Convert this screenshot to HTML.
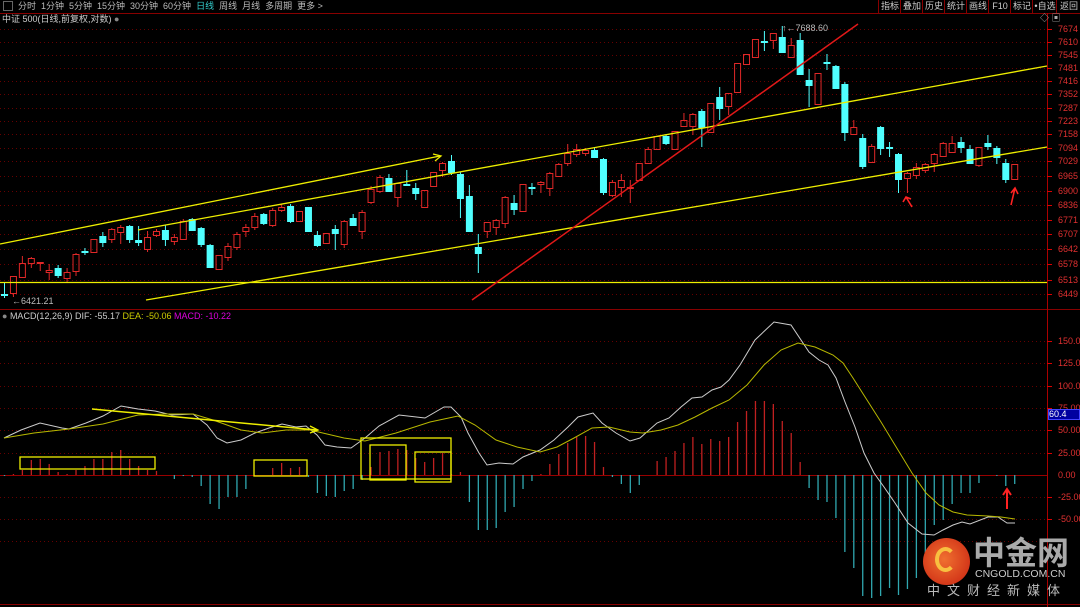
<!DOCTYPE html>
<html><head><meta charset="utf-8"><style>
body{margin:0;background:#000;width:1080px;height:607px;overflow:hidden;position:relative;font-family:"Liberation Sans","Noto Sans CJK SC",sans-serif;color:#c8c8c8}
.t{position:absolute;font-size:9px;white-space:nowrap;line-height:11px}
#svg{position:absolute;left:0;top:0}
.ax{position:absolute;left:1058px;font-size:9px;color:#e03030;line-height:10px}
.btn{position:absolute;top:0;height:13px;font-size:9px;line-height:13px;color:#ccc;border-left:1px solid #800;text-align:center}
</style></head><body>
<svg id="svg" width="1080" height="607"></svg>
<div class="t" style="left:3px;top:1px;width:10px;height:10px;border:1px solid #666;box-sizing:border-box"></div>
<div class="t" style="left:18px;top:1px;color:#bbb">分时 &nbsp;1分钟 &nbsp;5分钟 &nbsp;15分钟 &nbsp;30分钟 &nbsp;60分钟 &nbsp;<span style="color:#3cc">日线</span> &nbsp;周线 &nbsp;月线 &nbsp;多周期 &nbsp;更多 &gt;</div>
<div class="btn" style="left:878px;width:22px">指标</div>
<div class="btn" style="left:900px;width:22px">叠加</div>
<div class="btn" style="left:922px;width:22px">历史</div>
<div class="btn" style="left:944px;width:22px">统计</div>
<div class="btn" style="left:966px;width:22px">画线</div>
<div class="btn" style="left:988px;width:22px">F10</div>
<div class="btn" style="left:1010px;width:22px">标记</div>
<div class="btn" style="left:1032px;width:24px">•自选</div>
<div class="btn" style="left:1056px;width:24px">返回</div>
<div class="t" style="left:2px;top:14px;color:#ccc">中证 500(日线,前复权,对数) <span style="color:#888">●</span></div>
<div class="t" style="left:1040px;top:13px;color:#aaa">◇ ▣</div>
<div class="t" style="left:2px;top:311px;color:#ccc"><span style="color:#888">●</span> MACD(12,26,9) DIF: -55.17 <span style="color:#cc0">DEA: -50.06</span> <span style="color:#d0d">MACD: -10.22</span></div>
<div class="t" style="left:12px;top:296px;color:#bbb">←6421.21</div>
<div class="t" style="left:782px;top:23px;color:#bbb">↑←7688.60</div>
<div class="ax" style="top:24px">7674</div><div class="ax" style="top:37px">7610</div><div class="ax" style="top:50px">7545</div><div class="ax" style="top:63px">7481</div><div class="ax" style="top:76px">7416</div><div class="ax" style="top:89px">7352</div><div class="ax" style="top:103px">7287</div><div class="ax" style="top:116px">7223</div><div class="ax" style="top:129px">7158</div><div class="ax" style="top:143px">7094</div><div class="ax" style="top:156px">7029</div><div class="ax" style="top:171px">6965</div><div class="ax" style="top:186px">6900</div><div class="ax" style="top:200px">6836</div><div class="ax" style="top:215px">6771</div><div class="ax" style="top:229px">6707</div><div class="ax" style="top:244px">6642</div><div class="ax" style="top:259px">6578</div><div class="ax" style="top:275px">6513</div><div class="ax" style="top:289px">6449</div>
<div class="ax" style="top:336px">150.0</div><div class="ax" style="top:358px">125.0</div><div class="ax" style="top:381px">100.0</div><div class="ax" style="top:403px">75.00</div><div class="ax" style="top:425px">50.00</div><div class="ax" style="top:448px">25.00</div><div class="ax" style="top:470px">0.00</div><div class="ax" style="top:492px">-25.00</div><div class="ax" style="top:514px">-50.00</div>
<div class="t" style="left:1048px;top:409px;width:32px;height:11px;background:#0000a0;border:1px solid #44f;box-sizing:border-box;color:#fff;line-height:9px">60.4</div>
<div style="position:absolute;left:923px;top:538px;width:47px;height:47px;border-radius:50%;background:radial-gradient(circle at 45% 45%,#f07030,#c82010)"></div>
<div style="position:absolute;left:935px;top:547px;width:21px;height:25px;border-radius:50%;border:4px solid #f8c040;box-sizing:border-box;border-right-color:transparent"></div>
<div class="t" style="left:973px;top:534px;font-size:32px;line-height:38px;color:#aaa;font-weight:bold">中金网</div>
<div class="t" style="left:975px;top:569px;font-size:10.5px;color:#ccc">CNGOLD.COM.CN</div>
<div class="t" style="left:927px;top:583px;font-size:13px;line-height:15px;color:#bbb;letter-spacing:7px">中文财经新媒体</div>
<script>
var s='';
function L(x1,y1,x2,y2,c,w,e){s+='<line x1="'+x1+'" y1="'+y1+'" x2="'+x2+'" y2="'+y2+'" stroke="'+c+'" stroke-width="'+(w||1)+'"'+(e||'')+'/>';}
L(0,13.5,1080,13.5,'#800');L(0,309.5,1080,309.5,'#800');L(0,604.5,1080,604.5,'#800');L(1047.5,13,1047.5,607,'#a00');
var gy=[29,42,55,68,81,94,108,121,134,148,161,176,191,205,220,234,249,264,280,294];
gy.forEach(function(y){L(0,y+.5,1047,y+.5,'#600',1,' stroke-dasharray="1,3"');L(1047,y+.5,1052,y+.5,'#d00');});
[341,363,386,408,430,453,497,519,541].forEach(function(y){L(0,y+.5,1047,y+.5,'#600',1,' stroke-dasharray="1,3"');L(1047,y+.5,1052,y+.5,'#d00');});
L(0,475.5,1047,475.5,'#900');
var C=[[0,294,294,282,298],[1,276,293,276,297],[1,263,277,256,277],[1,258,263,257,268],[1,262,262,262,271],[1,270,272,264,280],[0,268,275,265,278],[1,272,278,268,282],[1,254,271,253,276],[0,251,251,248,255],[1,239,252,239,253],[0,236,242,232,247],[1,229,239,228,243],[1,227,232,225,244],[0,226,239,225,243],[0,240,242,226,246],[1,237,249,231,252],[1,231,235,229,237],[0,230,239,225,246],[1,237,241,234,245],[1,221,239,219,239],[0,219,230,218,231],[0,228,244,227,247],[0,245,267,244,268],[1,255,269,255,269],[1,246,257,243,261],[1,234,247,232,250],[1,227,231,224,237],[1,216,227,213,230],[0,214,223,213,225],[1,210,225,208,227],[1,207,210,204,212],[0,206,221,204,223],[1,211,221,211,221],[0,207,231,207,231],[0,235,245,231,247],[1,233,243,233,244],[0,229,233,225,250],[1,221,244,220,248],[0,218,225,214,226],[1,212,231,210,239],[1,189,202,186,204],[1,177,191,175,193],[0,178,191,174,191],[1,183,197,183,207],[0,184,184,170,185],[0,188,193,183,200],[1,190,207,190,207],[1,172,186,172,186],[1,163,170,162,177],[0,161,172,155,175],[0,174,198,172,218],[0,196,231,185,231],[0,247,253,234,273],[1,222,231,222,238],[1,220,227,219,235],[1,197,223,196,228],[0,203,209,195,215],[1,184,211,184,211],[0,187,187,183,195],[1,182,184,181,193],[1,173,188,172,196],[1,164,176,163,177],[1,153,163,144,166],[1,149,154,144,157],[1,150,153,148,156],[0,150,157,147,158],[0,159,192,158,195],[1,182,195,180,197],[1,180,187,174,197],[1,187,188,180,203],[1,163,180,163,180],[1,149,163,147,164],[1,136,149,136,149],[0,136,143,134,145],[1,131,149,131,149],[1,120,126,113,127],[1,114,126,113,135],[0,111,127,109,147],[1,103,132,103,132],[0,97,108,87,120],[1,93,106,93,115],[1,63,92,63,92],[1,54,64,54,65],[1,39,57,39,57],[0,41,41,31,51],[1,33,40,33,49],[0,37,52,26,53],[1,45,57,38,57],[0,40,74,33,75],[0,80,85,69,107],[1,73,104,73,104],[0,62,62,54,70],[0,66,88,65,88],[0,84,132,82,141],[1,127,134,120,135],[0,138,166,134,169],[1,146,162,144,162],[0,127,148,126,155],[0,147,147,142,157],[0,154,179,153,193],[1,173,178,172,193],[1,167,175,163,179],[1,164,170,163,173],[1,154,163,153,172],[1,143,156,142,157],[1,143,152,136,153],[0,142,147,137,153],[0,149,163,145,163],[1,147,165,147,167],[0,143,146,135,150],[0,148,157,146,164],[0,163,179,159,183],[1,164,179,164,179]];
C.forEach(function(c,i){var x=4+8.94*i,col=c[0]?'#e02828':'#50ffff';
L(x+.5,c[3],x+.5,c[1],col);L(x+.5,c[2],x+.5,c[4],col);var h=Math.max(c[2]-c[1],1);
if(c[0])s+='<rect x="'+(x-2.5)+'" y="'+(c[1]+.5)+'" width="6" height="'+h+'" fill="none" stroke="'+col+'"/>';
else s+='<rect x="'+(x-3)+'" y="'+c[1]+'" width="7" height="'+(h+1)+'" fill="'+col+'"/>';});
L(0,282.5,1047,282.5,'#ee0',1.3);
L(0,244,440,156,'#ee0',1.3);s+='<path d="M433,154 L441,156 L435,161" fill="none" stroke="#ee0" stroke-width="1.3"/>';
L(138,230,1047,66,'#ee0',1.3);L(146,300,1047,147,'#ee0',1.3);L(472,300,858,24,'#e01818',1.5);
s+='<path d="M912,207 L906,197 M903,202 L906,197 L911,199" stroke="#f22" stroke-width="1.6" fill="none"/>';
s+='<path d="M1011,205 L1015,188 M1011,193 L1015,188 L1018,194" stroke="#f22" stroke-width="1.6" fill="none"/>';
var H=[-1,1,5,15,16,11,3,1,5,9,16,16,23,25,16,9,5,4,0,-4,-1,-2,-11,-29,-34,-22,-22,-14,0,0,7,12,7,8,-2,-18,-21,-22,-16,-14,-5,8,23,24,26,25,17,13,17,22,1,3,-27,-55,-55,-53,-37,-32,-14,-6,1,11,21,32,38,39,33,8,-2,-9,-18,-10,0,14,18,24,32,38,31,36,34,38,53,64,74,74,71,54,42,13,-13,-25,-27,-43,-77,-93,-121,-123,-121,-113,-120,-114,-103,-78,-50,-45,-29,-18,-18,-8,0,-1,-11,-9];
H.forEach(function(v,i){if(!v)return;var x=4+8.94*i+.5;L(x,475,x,475-v,v>0?'#c02020':'#30a8b0',1.3);});
function P(pts,c){s+='<polyline points="'+pts+'" fill="none" stroke="'+c+'" stroke-width="1"/>';}
P('4,438 21,430 40,423 62,428 69,429 86,423 103,416 121,406 138,409 155,411 172,415 193,414 207,425 217,438 227,443 241,440 255,433 269,428 282,424 296,427 306,426 317,435 325,445 337,447 351,448 365,438 379,426 399,415 425,418 444,407 451,407 461,417 468,433 479,453 487,465 499,463 513,464 523,457 540,450 554,440 568,427 578,417 593,413 602,423 616,433 630,441 640,438 657,423 669,418 681,407 692,398 702,397 712,390 721,387 729,380 740,365 755,340 774,322 791,325 809,352 819,360 828,365 836,378 845,402 855,427 864,453 874,473 884,487 895,503 908,523 922,534 934,535 943,530 953,525 962,522 970,524 988,517 998,517 1007,523 1015,523','#ccc');
P('4,438 34,433 69,429 103,424 138,415 165,414 193,414 213,420 241,430 262,433 286,430 310,430 344,438 365,441 396,433 430,422 458,416 475,425 496,440 517,447 540,452 557,447 574,438 592,428 609,427 630,432 643,433 661,430 678,425 695,417 712,408 729,400 747,385 764,365 781,350 798,343 815,347 833,355 843,363 853,378 867,400 881,422 898,450 912,473 926,493 939,505 953,512 967,515 988,516 1001,517 1015,519','#b8b800');
function R(x1,y1,x2,y2){s+='<rect x="'+x1+'" y="'+y1+'" width="'+(x2-x1)+'" height="'+(y2-y1)+'" fill="none" stroke="#ee0" stroke-width="1.3"/>';}
R(20,457,155,469);R(254,460,307,476);R(361,438,451,479);R(370,445,406,480);R(415,452,451,482);
L(92,409,317,430,'#ee0',1.5);s+='<path d="M310,426 L318,430 L310,433" fill="none" stroke="#ee0" stroke-width="1.3"/>';
s+='<path d="M1007,509 L1007,490 M1003,495 L1007,489 L1011,495" stroke="#f22" stroke-width="2" fill="none"/>';
document.getElementById('svg').innerHTML=s;
</script>
</body></html>
